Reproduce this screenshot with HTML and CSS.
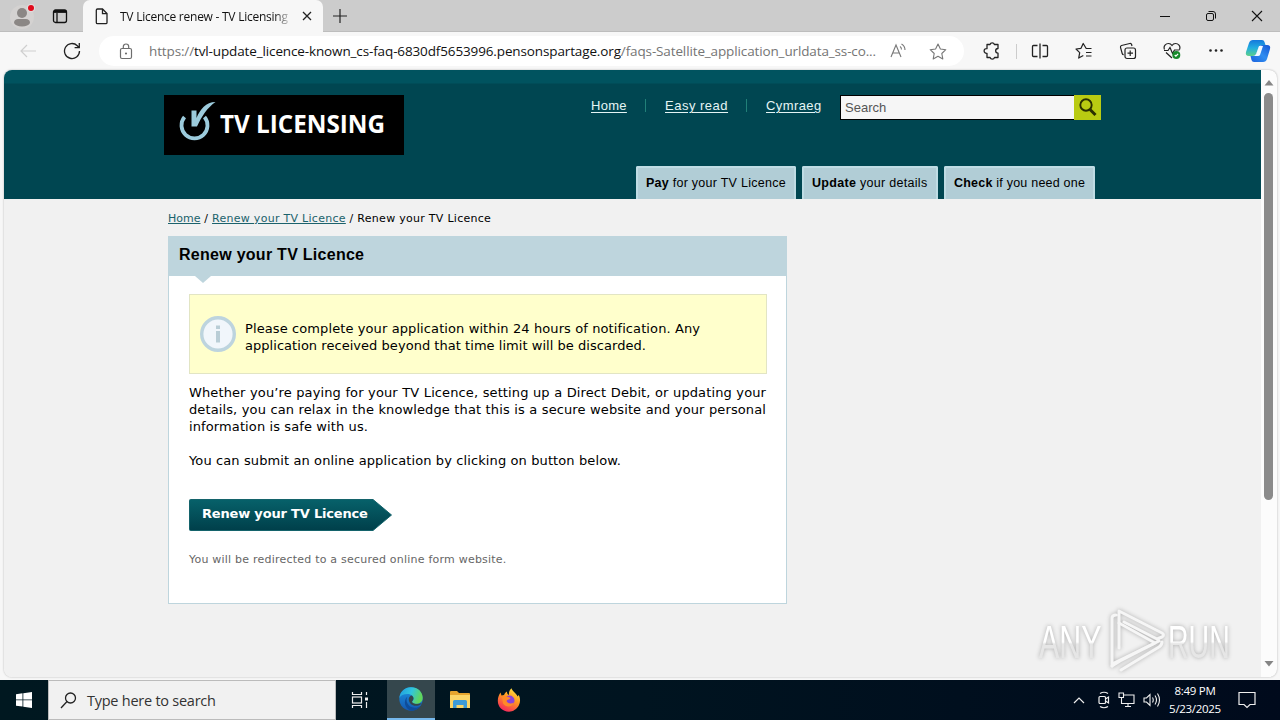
FILE: index.html
```
<!DOCTYPE html>
<html lang="en">
<head>
  <meta charset="UTF-8">
  <meta name="viewport" content="width=device-width, initial-scale=1.0">
  <title>TV Licence renew - TV Licensing</title>
  <link rel="stylesheet" href="styles.css">
</head>
<body>
  <!-- Tab strip -->
  <div class="tab-strip">
    <div class="strip-left">
      <svg class="profile" width="28" height="32" viewBox="0 0 28 32">
        <circle cx="12" cy="17" r="12" fill="#d4d2d1"/>
        <circle cx="12" cy="13" r="5" fill="#8b8785"/>
        <path d="M4 23c0-3 2-4 4-4h8c2 0 4 1 4 4-1 2-4 3.500-8 3.500S5 25 4 23z" fill="#8b8785"/>
        <circle cx="21" cy="8" r="4" fill="#e3dcdc"/>
        <circle cx="21" cy="8" r="3" fill="#e00b1c"/>
      </svg>
      <svg class="workspaces" width="16" height="16" viewBox="0 0 16 16" fill="none" stroke="#111" stroke-width="1.300">
        <rect x="1.500" y="2" width="13" height="12.500" rx="2"/>
        <path d="M1.500 4h13M5 5v9.500" />
        <path d="M2 3.300h12" stroke-width="2.500"/>
      </svg>
    </div>
    <div class="tab">
      <svg width="14" height="17" viewBox="0 0 14 17" fill="none" stroke="#222" stroke-width="1.300">
        <path d="M2.500 1h5l4.500 4.500V14.500a1.200 1.200 0 0 1-1.200 1.200H2.500a1.200 1.200 0 0 1-1.200-1.200V2.200A1.200 1.200 0 0 1 2.500 1z"/>
        <path d="M7.500 1v4.700H12"/>
      </svg>
      <span class="tab-title">TV Licence renew - TV Licensing</span>
      <svg class="tab-close" width="10" height="10" viewBox="0 0 10 10" stroke="#222" stroke-width="1.300"><path d="M1 1l8 8M9 1L1 9"/></svg>
    </div>
    <svg class="new-tab" width="14" height="14" viewBox="0 0 14 14" stroke="#222" stroke-width="1.200"><path d="M7 0v14M0 7h14"/></svg>
    <div class="window-buttons">
      <svg width="12" height="12" viewBox="0 0 12 12" fill="none" stroke="#111"><path d="M1 6.500h10"/></svg>
      <svg width="12" height="12" viewBox="0 0 12 12" fill="none" stroke="#111"><rect x="1.500" y="3.500" width="7" height="7" rx="1.500"/><path d="M3.500 1.500H8a2.500 2.500 0 0 1 2.500 2.500v4.500"/></svg>
      <svg width="12" height="12" viewBox="0 0 12 12" fill="none" stroke="#111" stroke-width="1.100"><path d="M1 1l10 10M11 1L1 11"/></svg>
    </div>
  </div>

  <!-- Toolbar -->
  <div class="toolbar">
    <svg class="back" width="16" height="14" viewBox="0 0 16 14" fill="none" stroke="#cfcfcf" stroke-width="1.200"><path d="M16 7H1M7 1L1 7l6 6"/></svg>
    <svg class="reload" width="18" height="18" viewBox="0 0 18 18" fill="none" stroke="#222" stroke-width="1.300"><path d="M16.500 9A7.500 7.500 0 1 1 14.300 3.700L16 5.500M16.300 1v4.700h-4.700"/></svg>
    <div class="address">
      <svg class="lock" width="14" height="17" viewBox="0 0 14 17" fill="none" stroke="#6d6d6d" stroke-width="1.200">
        <rect x="1.500" y="5.500" width="11" height="10" rx="1.500"/>
        <path d="M4.300 5.500V3.700a2.700 2.700 0 0 1 5.400 0v1.800"/>
        <circle cx="7" cy="10.500" r=".5" fill="#6d6d6d"/>
      </svg>
      <span class="url"><span class="muted">https://</span>tvl-update_licence-known_cs-faq-6830df5653996.pensonspartage.org<span class="muted">/faqs-Satellite_application_urldata_ss-co...</span></span>
      <svg class="read-aloud" width="17" height="16" viewBox="0 0 17 16" fill="none" stroke="#777" stroke-width="1.100"><path d="M1 14L6 2l5 12M2.800 10h6.500M10 3.500q1.500 1 1.500 3M11.500 1Q15 3 15 7"/></svg>
      <svg class="favorite" width="18" height="17" viewBox="0 0 18 17" fill="none" stroke="#777" stroke-width="1.100" stroke-linejoin="round"><path d="M9 1l2.400 5 5.400.7-4 3.800 1 5.400L9 13.300 4.200 15.900l1-5.400-4-3.800L6.600 6z"/></svg>
    </div>
    <div class="tools">
      <svg width="18" height="18" viewBox="0 0 18 18" fill="none" stroke="#222" stroke-width="1.300" stroke-linejoin="round"><path d="M4 2.500h3a2.300 2.300 0 0 1 4.400 0H15v4a2 2 0 0 0 0 4.700v4.300h-3.500a2.300 2.300 0 0 1-4.400 0H4v-4.200a2.400 2.400 0 1 1 0-4.700z"/></svg>
      <i class="divider"></i>
      <svg width="18" height="18" viewBox="0 0 18 18" fill="none" stroke="#222" stroke-width="1.300"><path d="M6.500 3.500h-4a1 1 0 0 0-1 1v9a1 1 0 0 0 1 1h4M11.500 3.500h4a1 1 0 0 1 1 1v9a1 1 0 0 1-1 1h-4M9 1.500v15"/></svg>
      <svg width="18" height="18" viewBox="0 0 18 18" fill="none" stroke="#222" stroke-width="1.200" stroke-linejoin="round"><path d="M16.500 6.500h-5.300L8.200 1.500 6 6.300l-5 .7 3.700 3.600-1 5.500 4.600-2.600M11 10.500h5.500M11 14h5.500"/></svg>
      <svg width="18" height="18" viewBox="0 0 18 18" fill="none" stroke="#222" stroke-width="1.200"><rect x="6" y="6" width="10.500" height="10.500" rx="2"/><path d="M11.200 8.500v5.500M8.500 11.200H14M13 4l-.4-1.500a1.500 1.500 0 0 0-1.800-1L2.500 3.500a1.500 1.500 0 0 0-1 1.800l1.700 6.200a1.500 1.500 0 0 0 1.500 1.100"/></svg>
      <svg width="18" height="18" viewBox="0 0 18 18" fill="none" stroke="#222" stroke-width="1.200"><path d="M1.500 7.500C0 4 3 1.500 5.500 1.500c1.700 0 2.800.9 3.500 2 .7-1.100 1.800-2 3.500-2 2.500 0 5.500 2.500 4 6M1 8.500h4l2-3 2.500 6 2-3.500h5M3 10.500l6 5.500"/><circle cx="13.300" cy="13" r="4" fill="#188a2c" stroke="none"/><path d="M11.700 13l1.200 1.200 2.200-2.400" stroke="#fff"/></svg>
      <svg width="18" height="18" viewBox="0 0 18 18" fill="#222"><circle cx="3.500" cy="8.500" r="1.300"/><circle cx="9" cy="8.500" r="1.300"/><circle cx="14.500" cy="8.500" r="1.300"/></svg>
      <svg class="copilot" width="26" height="24" viewBox="0 0 26 24">
        <defs>
          <linearGradient id="cp1" x1="0" y1="1" x2="0" y2="0"><stop offset="0" stop-color="#5ed08a"/><stop offset=".5" stop-color="#22aee0"/><stop offset="1" stop-color="#1478dc"/></linearGradient>
          <linearGradient id="cp2" x1="1" y1="0" x2="0" y2="1"><stop offset="0" stop-color="#1555d4"/><stop offset=".5" stop-color="#2f8df0"/><stop offset="1" stop-color="#1b62dd"/></linearGradient>
        </defs>
        <path d="M8 1h9q2 0 2.500 2l1 3h-3q-3 0-4 3l-2 5q-1 3-4 3H4q-4 0-3-4L4 4q1-3 4-3z" fill="url(#cp1)"/>
        <path d="M18 23H9q-2 0-2.500-2l-1-4h3q2 0 3-3l2-5q1-3 4-3H22q4 0 3 4l-3 10q-1 3-4 3z" fill="url(#cp2)"/>
        <path d="M14 7h4l-3 9q-.5 1-2 1H9q2-1 2.500-3z" fill="#f4faff"/>
      </svg>
    </div>
  </div>

  <!-- Page -->
  <div class="viewport">
    <div class="site">
      <header class="site-header">
        <div class="header-inner">
          <div class="logo">
            <svg width="240" height="60" viewBox="0 0 240 60">
              <path d="M20.500 22A13 13 0 1 0 40.500 22" fill="none" stroke="#9ccbdc" stroke-width="3.800"/>
              <path d="M27.500 15.500h5V23C36 14.500 42 7 51.500 7 43 13 38 21 33 31.500h-5.500z" fill="#9ccbdc"/>
              <text x="56" y="38" textLength="165" lengthAdjust="spacingAndGlyphs">TV LICENSING</text>
            </svg>
          </div>
          <div class="header-right">
            <div class="utility">
              <a class="link-home" href="#">Home</a>
              <a class="link-easy" href="#">Easy read</a>
              <a class="link-cymraeg" href="#">Cymraeg</a>
              <div class="search">
                <span class="search-field">Search</span>
                <span class="search-button">
                  <svg width="21" height="21" viewBox="0 0 21 21" fill="none" stroke="#2a3000"><circle cx="9" cy="8" r="5.700" stroke-width="1.900"/><path d="M13 12.500l5.500 5.500" stroke-width="3"/></svg>
                </span>
              </div>
            </div>
            <nav class="main-nav">
              <a class="nav-pay" href="#"><b>Pay</b> for your TV Licence</a>
              <a class="nav-update" href="#"><b>Update</b> your details</a>
              <a class="nav-check" href="#"><b>Check</b> if you need one</a>
            </nav>
          </div>
        </div>
      </header>

      <main class="content">
        <div class="breadcrumb"><a href="#">Home</a> / <a href="#">Renew your TV Licence</a> / Renew your TV Licence</div>
        <section class="panel">
          <h1>Renew your TV Licence</h1>
          <div class="panel-body">
            <div class="notice">
              <svg width="36" height="36" viewBox="0 0 36 36"><circle cx="18" cy="18" r="16.300" fill="#f1f6fb" stroke="#bdd4de" stroke-width="3.400"/><path d="M16 9.500h4v3.500h-4zM16 15h4v11.500h-4z" fill="#b9cdd6"/></svg>
              <p>Please complete your application within 24 hours of notification. Any<br><span class="notice-end">application received beyond that time limit will be discarded.</span></p>
            </div>
            <p class="intro">Whether you’re paying for your TV Licence, setting up a Direct Debit, or updating your details, you can relax in the knowledge that this is a secure website and your personal information is safe with us.</p>
            <p class="intro">You can submit an online application by clicking on button below.</p>
            <a class="renew-button" href="#">
              <svg width="203" height="32" viewBox="0 0 203 32">
                <defs><linearGradient id="btn" x1="0" y1="0" x2="0" y2="1"><stop offset="0" stop-color="#07616a"/><stop offset="1" stop-color="#003f4a"/></linearGradient></defs>
                <path d="M.5 1.500a1 1 0 0 1 1-1H184l18.500 15.500L184 31.500H1.500a1 1 0 0 1-1-1z" fill="url(#btn)" stroke="#14636b"/>
              </svg>
              <span>Renew your TV Licence</span>
            </a>
            <p class="small">You will be redirected to a secured online form website.</p>
          </div>
        </section>
      </main>
    </div>
    <div class="scrollbar">
      <svg width="10" height="6" viewBox="0 0 10 6" fill="#858585"><path d="M5 0l4.500 5.500h-9z"/></svg>
      <i class="thumb"></i>
      <svg width="10" height="6" viewBox="0 0 10 6" fill="#858585"><path d="M.5 0h9L5 5.500z"/></svg>
    </div>
  </div>

  <svg class="watermark" width="216" height="68" viewBox="0 0 216 68">
    <defs><linearGradient id="wm" x1="0" y1="0" x2="0" y2="1"><stop offset=".5" stop-color="#fff"/><stop offset=".54" stop-color="#e6e6e6"/></linearGradient></defs>
    <text transform="translate(5 52) scale(.66 1)">ANY</text>
    <text transform="translate(134 52) scale(.62 1)">RUN</text>
    <path d="M78 60V12q0-3 4-3M85 42V5l43 22q3 2 0 4l-5 2-33-17M80 57l45-22M87 64l38-23q3-2 3-5" stroke-linecap="round"/>
    <path d="M78 60l8-5 35-18-36-20" stroke-linecap="round"/>
  </svg>

  <!-- Taskbar -->
  <div class="taskbar">
    <div class="start">
      <svg width="16" height="16" viewBox="0 0 16 16" fill="#fff"><path d="M0 2.200L6.500 1.300v6.200H0zM7.300 1.200L16 0v7.500H7.300zM0 8.300h6.500v6.300L0 13.700zM7.300 8.300H16V16l-8.700-1.200z"/></svg>
    </div>
    <div class="task-search">
      <svg width="17" height="17" viewBox="0 0 17 17" fill="none" stroke="#222" stroke-width="1.300"><circle cx="10.500" cy="6" r="5"/><path d="M7 9.500L1 16"/></svg>
      <span>Type here to search</span>
    </div>
    <div class="task-icon">
      <svg width="18" height="18" viewBox="0 0 18 18" fill="none" stroke="#eee" stroke-width="1.200"><path d="M1.500 1v2.500h9V1M1.500 17v-2.500h9V17M15.500 1v3M15.500 11v6"/><rect x="1.500" y="6" width="9" height="6"/><path d="M14 6.500h3v3h-3z" fill="#eee" stroke="none"/></svg>
    </div>
    <div class="task-icon active">
      <svg width="24" height="24" viewBox="0 0 24 24">
        <defs>
          <linearGradient id="e1" x1="0" y1="0" x2="1" y2=".3"><stop offset="0" stop-color="#1f9be0"/><stop offset=".55" stop-color="#31c5dd"/><stop offset="1" stop-color="#61d65a"/></linearGradient>
          <linearGradient id="e2" x1="0" y1="0" x2="0" y2="1"><stop offset="0" stop-color="#1c94e0"/><stop offset="1" stop-color="#1457b0"/></linearGradient>
        </defs>
        <circle cx="12" cy="12" r="11.700" fill="url(#e2)"/>
        <path d="M.4 11C1 4.500 6 .3 12 .3c7 0 11.700 4.700 11.700 10.500 0 4-3 6-6.200 6-3 0-4.500-1-4.500-1.800 0-.7 1.500-1.300 1.500-3.500C14.500 8.500 11.500 7 8.500 7 4.500 7 1.500 8.500.4 11z" fill="url(#e1)"/>
        <path d="M8.500 9.500C6 13 8.500 20.500 15.500 20.800c2.500.1 4.500-.6 6-1.800-2 3-5.500 4.700-9 4.700C6 22.500 3.500 14 8.500 9.500z" fill="#0f4c99"/>
        <path d="M13 15c-.5-.8 1.500-1.300 1.500-3.500 0-1.300-.8-2.300-2-3C9.500 9.500 9 13 11 16c1.500 2.200 5 3.500 8.500 2.500 1.500-.4 2.600-1.300 3.200-2.500-3 1.500-8 1.500-9.700-1z" fill="#35454a"/>
      </svg>
    </div>
    <div class="task-icon">
      <svg width="22" height="20" viewBox="0 0 22 20"><path d="M1 2q0-1 1-1h6l2 2h10q1 0 1 1v14H1z" fill="#e6a52e"/><path d="M1 5h20v13H1z" fill="#fbd567"/><path d="M4 11.500q0-1.500 1.500-1.500h11q1.500 0 1.500 1.500V18h-3.500v-3h-7v3H4z" fill="#3d9bd8"/></svg>
    </div>
    <div class="task-icon">
      <svg width="24" height="24" viewBox="0 0 24 24">
        <defs><linearGradient id="ff" x1=".8" y1="0" x2=".3" y2="1"><stop offset="0" stop-color="#ffe645"/><stop offset=".45" stop-color="#ff9820"/><stop offset="1" stop-color="#f5245e"/></linearGradient></defs>
        <path d="M3.500 4.500l1 3 2.500-.5c.7-2 2-3 3-3.500-.2 2 .8 3 2 3.500-.3-3 .5-5 2.500-6.800.5 3 5 4.800 6 8.300l1.200-1.500c1.800 3 1.700 7 .3 10C20 21 16 23.700 12 23.700 5.500 23.700.8 19 .8 12.800c0-3.500 1.200-6 2.700-8.300z" fill="url(#ff)"/>
        <circle cx="12.500" cy="12.500" r="5" fill="#8a42d8"/>
        <path d="M5 9c3-1.500 6-.5 8.500 1.200-1 1.500-3.500 1-4 2.800 1.500 3 5 3 7.500 1.500C15.500 19 9 20 6 15.500z" fill="#ff8a28"/>
      </svg>
    </div>
    <div class="tray">
      <svg width="12" height="8" viewBox="0 0 12 8" fill="none" stroke="#eee" stroke-width="1.200"><path d="M1 7l5-5 5 5"/></svg>
      <svg class="tray-cam" width="12" height="18" viewBox="0 0 12 18" fill="none" stroke="#eee" stroke-width="1.200"><rect x="1" y="5.500" width="6.500" height="7" rx="1"/><path d="M7.500 8l3-2v6l-3-2M2 2.500q4-2.500 8 0M2 15.500q4 2.500 8 0"/></svg>
      <svg width="17" height="16" viewBox="0 0 17 16" fill="none" stroke="#eee" stroke-width="1.100"><path d="M5.500 3H16v8.500H3.500V6M7 14.500h6M10 11.500v3M1 1h4.500v4.500H1z"/></svg>
      <svg width="18" height="16" viewBox="0 0 18 16" fill="none" stroke="#eee" stroke-width="1.100"><path d="M1 6h2.500L7 2.500v11L3.500 10H1zM9.500 5.500q1.500 2.500 0 5M12 3.500q3 4.500 0 9M14.500 1.500q4 6.500 0 13"/></svg>
      <div class="clock"><span>8:49 PM</span><span class="date">5/23/2025</span></div>
      <svg width="18" height="18" viewBox="0 0 18 18" fill="none" stroke="#eee" stroke-width="1.200"><path d="M1 1.500h16v12h-5l-3 3-3-3H1z"/></svg>
    </div>
  </div>
</body>
</html>
```
FILE: styles.css
```
:root {
  --teal: #004651;
  --teal-light: #00535f;
  --pale-blue: #bed5dd;
  --chrome: #f7f7f7;
}

* {
  box-sizing: border-box;
  margin: 0;
  padding: 0;
}

body {
  width: 1280px;
  height: 720px;
  overflow: hidden;
  background-color: var(--chrome);
  font-family: "Open Sans", "Noto Sans", sans-serif;
}

svg {
  display: block;
  flex: none;
}

/* Tab strip */
.tab-strip {
  display: flex;
  align-items: center;
  height: 32px;
  background-color: #ccc;
  box-shadow: inset 0 -1px 0 #bdbdbd;
}

.strip-left {
  display: flex;
  align-items: center;
  gap: 14px;
  width: 83px;
  padding-left: 10px;
}

.tab {
  display: flex;
  align-items: center;
  width: 240px;
  height: 32px;
  padding: 0 11px 0 12px;
  background-color: var(--chrome);
  border-radius: 7px 7px 0 0;
}

.tab-title {
  width: 169px;
  margin-left: 11px;
  overflow: hidden;
  white-space: nowrap;
  font-size: 12px;
  letter-spacing: -0.25px;
  color: #111;
  -webkit-mask-image: linear-gradient(to right, #000 155px, transparent 172px);
  mask-image: linear-gradient(to right, #000 155px, transparent 172px);
}

.tab-close {
  margin-left: 14px;
}

.new-tab {
  margin-left: 10px;
}

.window-buttons {
  display: flex;
  gap: 34px;
  margin-left: auto;
  padding-right: 17px;
}

/* Toolbar */
.toolbar {
  display: flex;
  align-items: center;
  height: 38px;
  padding-left: 20px;
}

.reload {
  margin-left: 27px;
}

.address {
  display: flex;
  align-items: center;
  width: 865px;
  height: 30px;
  margin-left: 18px;
  padding-left: 20px;
  background-color: #fff;
  border-radius: 15px;
}

.url {
  width: 729px;
  margin-left: 16px;
  white-space: nowrap;
  font-size: 13.5px;
  letter-spacing: -0.13px;
  color: #111;
}

.muted {
  color: #757575;
}

.read-aloud {
  margin-left: 12px;
}

.favorite {
  margin-left: 22px;
}

.tools {
  display: flex;
  align-items: center;
  padding-left: 19px;
  gap: 26px;
}

.divider {
  width: 1px;
  height: 15px;
  margin: 0 -12px 0 -11px;
  background-color: #ccc;
}

.copilot {
  margin-left: -6px;
}

/* Page */
.viewport {
  display: flex;
  width: 1273px;
  height: 607px;
  margin-left: 4px;
  overflow: hidden;
  background-color: #fcfcfc;
  border-radius: 8px;
  box-shadow: 0 0 2px #aaa;
}

.site {
  width: 1257px;
  background-color: #f1f1f1;
}

.site-header {
  height: 129px;
  padding: 25px 0 0 160px;
  background: linear-gradient(var(--teal-light) 13px, var(--teal) 14px);
}

.header-inner {
  display: flex;
  justify-content: space-between;
  width: 937px;
}

.logo {
  width: 240px;
  height: 60px;
  background-color: #000;
}

.logo text {
  font: bold 25px "Open Sans", sans-serif;
  fill: #fff;
}

.utility {
  display: flex;
  height: 25px;
  font-family: "Liberation Sans", Arial, sans-serif;
  font-size: 13px;
  line-height: 21px;
}

.utility a {
  color: #e5f5f5;
  text-underline-offset: 2px;
  white-space: nowrap;
}

.link-home {
  width: 74px;
  letter-spacing: 0.3px;
  background: linear-gradient(#218078, #218078) 54px 4px / 1px 13px no-repeat;
}

.link-easy {
  width: 101px;
  letter-spacing: 0.5px;
  background: linear-gradient(#218078, #218078) 81px 4px / 1px 13px no-repeat;
}

.link-cymraeg {
  width: 74px;
  letter-spacing: 0.4px;
}

.search {
  display: flex;
  width: 261px;
  height: 25px;
}

.search-field {
  width: 234px;
  padding-left: 4px;
  line-height: 24px;
  background-color: #f6f6f6;
  border: 1px solid #000;
  border-right: 0;
  color: #555;
}

.search-button {
  display: flex;
  align-items: center;
  justify-content: center;
  width: 27px;
  background-color: #b9cb12;
}

.main-nav {
  display: flex;
  gap: 6px;
  margin: 46px 0 0 45px;
  font-family: "Liberation Sans", Arial, sans-serif;
  font-size: 12.5px;
  letter-spacing: 0.26px;
}

.main-nav a {
  height: 33px;
  padding-left: 8px;
  background-color: #b1cdd6;
  border: 2px solid #bfdce4;
  border-bottom: 0;
  border-radius: 2px 2px 0 0;
  color: #000;
  line-height: 30px;
  text-decoration: none;
  white-space: nowrap;
}

.nav-pay {
  width: 160px;
}

.nav-update {
  width: 136px;
  letter-spacing: 0.3px;
}

.nav-check {
  width: 151px;
  letter-spacing: 0.22px;
}

.content {
  padding: 12px 0 0 164px;
  font-family: "DejaVu Sans", Verdana, sans-serif;
  color: #000;
}

.breadcrumb {
  height: 25px;
  font-size: 11px;
  line-height: 16px;
  letter-spacing: 0.28px;
}

.breadcrumb a {
  color: #1b626c;
}

.breadcrumb a:first-child {
  letter-spacing: 0;
}

.panel {
  width: 619px;
  height: 368px;
  background-color: #fff;
  border: 1px solid var(--pale-blue);
}

.panel h1 {
  position: relative;
  height: 39px;
  padding-left: 10px;
  background-color: var(--pale-blue);
  font: bold 16px/35px "Liberation Sans", Arial, sans-serif;
  letter-spacing: 0.27px;
}

.panel h1::after {
  content: "";
  position: absolute;
  left: 26px;
  top: 39px;
  border: 8px solid transparent;
  border-top: 7px solid var(--pale-blue);
  border-bottom: 0;
}

.panel-body {
  padding: 18px 20px 0;
  font-size: 13px;
  line-height: 17px;
}

.notice {
  display: flex;
  align-items: center;
  gap: 9px;
  width: 578px;
  height: 80px;
  margin-bottom: 10px;
  padding-left: 10px;
  background-color: #ffc;
  border: 1px solid #e2e5c4;
}

.notice p {
  padding-top: 6px;
  white-space: nowrap;
  letter-spacing: 0.1px;
}

.notice-end {
  letter-spacing: 0.04px;
}

.intro {
  width: 577px;
  margin-bottom: 17px;
  text-align: justify;
  letter-spacing: 0.11px;
}

.renew-button {
  display: grid;
  width: 203px;
  height: 32px;
  margin-top: 30px;
  color: #fff;
  font-weight: bold;
  text-decoration: none;
}

.renew-button svg,
.renew-button span {
  grid-area: 1 / 1;
}

.renew-button span {
  padding-left: 13px;
  font-size: 13px;
  line-height: 30px;
  letter-spacing: -0.18px;
  white-space: nowrap;
}

.small {
  margin-top: 20px;
  font-size: 11px;
  letter-spacing: 0.22px;
  color: #666;
}

.scrollbar {
  display: flex;
  flex-direction: column;
  align-items: center;
  width: 15px;
  padding: 10px 0;
}

.thumb {
  width: 9px;
  height: 407px;
  margin: 7px 0 auto;
  background-color: #8b8b8b;
  border-radius: 5px;
}

.watermark {
  position: absolute;
  left: 1034px;
  top: 606px;
  filter: drop-shadow(0 0 2px #aaa);
}

.watermark text {
  font: 46px "Liberation Sans", sans-serif;
  fill: url(#wm);
}

.watermark path {
  fill: none;
  stroke: #f6f6f6;
  stroke-width: 3;
  stroke-linejoin: round;
}

/* Taskbar */
.taskbar {
  display: flex;
  height: 40px;
  margin-top: 3px;
  background: linear-gradient(to right, #001820, #001420 50%, #000a1c);
}

.start {
  display: flex;
  align-items: center;
  justify-content: center;
  width: 48px;
}

.task-search {
  display: flex;
  align-items: center;
  gap: 10px;
  width: 288px;
  padding-left: 11px;
  background-color: #f1f1f1;
  border: 1px solid #bbb;
  color: #333;
  font-size: 14.5px;
}

.task-search span {
  letter-spacing: -0.25px;
}

.task-icon {
  display: flex;
  align-items: center;
  justify-content: center;
  width: 48px;
  margin-right: 1px;
}

.task-icon.active {
  margin-left: 2px;
  background-color: #35474d;
  border-bottom: 2px solid #76b9ed;
}

.tray {
  display: flex;
  align-items: center;
  margin-left: auto;
  padding-right: 24px;
  gap: 8px;
}

.tray-cam {
  margin-left: 5px;
}

.clock {
  display: flex;
  flex-direction: column;
  align-items: center;
  width: 54px;
  margin: 0 8px 0 -1px;
  color: #fff;
  font-size: 11.5px;
  line-height: 18px;
  letter-spacing: -0.3px;
  white-space: nowrap;
}
```
